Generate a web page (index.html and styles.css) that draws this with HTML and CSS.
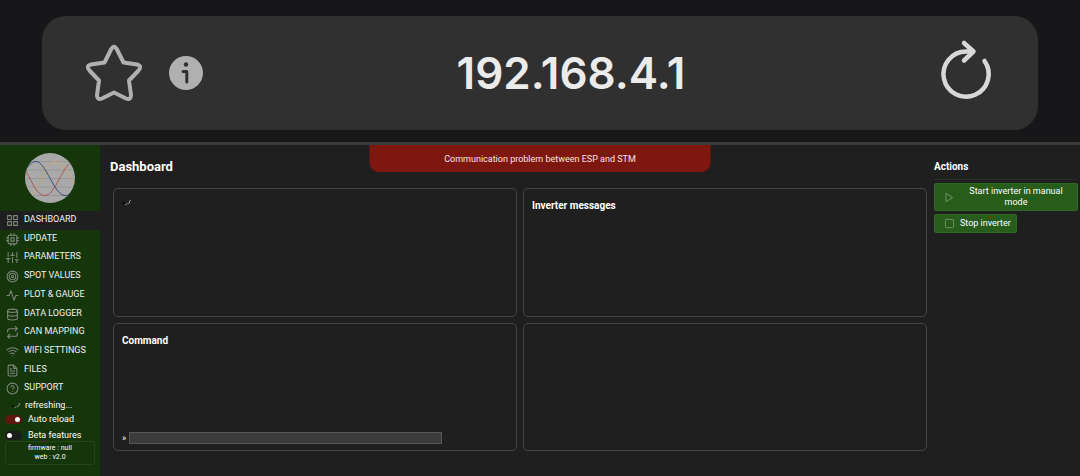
FILE: index.html
```html
<!DOCTYPE html>
<html lang="en">
<head>
  <meta charset="UTF-8">
  <meta name="viewport" content="width=device-width, initial-scale=1">
  <title>Dashboard</title>
  <link rel="stylesheet" href="styles.css">
</head>
<body>
  <!-- address bar -->
  <header class="browser">
    <div class="address-bar">
      <button class="bar-btn" type="button" aria-label="Bookmark">
        <svg class="star" viewBox="0 0 60 60"><path d="M27 6.500Q30 1 33 6.500L39.500 19.500L53 21.500Q58.500 23 54.500 27.500L45 37.500L47 52Q47 57.500 42 55.500L30 49.500L18 55.500Q13 57.500 13 52L15 37.500L5.500 27.500Q1.500 23 7 21.500L20.500 19.500Z"/></svg>
      </button>
      <button class="bar-btn" type="button" aria-label="Site information">
        <svg class="info" viewBox="0 0 34 34"><circle cx="17" cy="17" r="17" fill="#b0b0b0"/><circle cx="17" cy="8.500" r="2.200" fill="#303030"/><path d="M14 15.500h3.800V26" fill="none" stroke="#303030" stroke-width="3" stroke-linecap="round" stroke-linejoin="round"/></svg>
      </button>
      <span class="address">192.168.4.1</span>
      <button class="bar-btn" type="button" aria-label="Reload">
        <svg class="reload" viewBox="0 0 54 62"><path d="M45.500 19A22.600 22.600 0 1 1 27 9.500H34M25 1L34.500 9.500L25 18.500"/></svg>
      </button>
    </div>
  </header>

  <div class="app">
    <nav class="sidebar">
      <svg class="logo" viewBox="0 0 50 50">
        <circle cx="25" cy="25" r="25" fill="#a9a9a9"/>
        <path d="M7 8.500H43M2 17H48M0 25.500H50M2 34H48M7 42.500H43" stroke="#979797"/>
        <path d="M7 41C15 34 20 8.500 30 8.500C38 8.500 43 20 49 31" stroke="#c9a66a"/>
        <path d="M1 18C8 31 12 42.500 20 42.500C29 42.500 35 20 44.500 10.500" stroke="#ad5753"/>
        <path d="M2 15C5 11 8 8.500 11 8.500C21 8.500 29 42.500 40 42.500C42 42.500 43 42 44 41" stroke="#38507c"/>
      </svg>

      <ul class="menu">
        <li class="active"><a href="#dashboard"><svg class="icon" viewBox="0 0 24 24"><path d="M3 3h7v7H3zM14 3h7v7h-7zM14 14h7v7h-7zM3 14h7v7H3z"/></svg>DASHBOARD</a></li>
        <li><a href="#update"><svg class="icon" viewBox="0 0 24 24"><rect x="4" y="4" width="16" height="16" rx="2"/><path d="M9 9h6v6H9zM9 1v3M15 1v3M9 20v3M15 20v3M20 9h3M20 14h3M1 9h3M1 14h3"/></svg>UPDATE</a></li>
        <li><a href="#parameters"><svg class="icon" viewBox="0 0 24 24"><path d="M4 21v-7M4 10V3M12 21v-9M12 8V3M20 21v-5M20 12V3M1 14h6M9 8h6M17 16h6"/></svg>PARAMETERS</a></li>
        <li><a href="#spot"><svg class="icon" viewBox="0 0 24 24"><circle cx="12" cy="12" r="10"/><circle cx="12" cy="12" r="6"/><circle cx="12" cy="12" r="2"/></svg>SPOT VALUES</a></li>
        <li><a href="#plot"><svg class="icon" viewBox="0 0 24 24"><path d="M22 12h-4l-3 9L9 3l-3 9H2"/></svg>PLOT &amp; GAUGE</a></li>
        <li><a href="#logger"><svg class="icon" viewBox="0 0 24 24"><ellipse cx="12" cy="5" rx="9" ry="3"/><path d="M21 12c0 1.660-4 3-9 3s-9-1.340-9-3M3 5v14c0 1.660 4 3 9 3s9-1.340 9-3V5"/></svg>DATA LOGGER</a></li>
        <li><a href="#can"><svg class="icon" viewBox="0 0 24 24"><path d="M17 1l4 4-4 4M3 11V9a4 4 0 0 1 4-4h14M7 23l-4-4 4-4M21 13v2a4 4 0 0 1-4 4H3"/></svg>CAN MAPPING</a></li>
        <li><a href="#wifi"><svg class="icon" viewBox="0 0 24 24"><path d="M5 12.550a11 11 0 0 1 14.080 0M1.420 9a16 16 0 0 1 21.160 0M8.530 16.110a6 6 0 0 1 6.950 0M12 20h.01"/></svg>WIFI SETTINGS</a></li>
        <li><a href="#files"><svg class="icon" viewBox="0 0 24 24"><path d="M14 2H6a2 2 0 0 0-2 2v16a2 2 0 0 0 2 2h12a2 2 0 0 0 2-2V8zM14 2v6h6M16 13H8M16 17H8M10 9H8"/></svg>FILES</a></li>
        <li><a href="#support"><svg class="icon" viewBox="0 0 24 24"><circle cx="12" cy="12" r="10"/><path d="M9.090 9a3 3 0 0 1 5.830 1c0 2-3 3-3 3M12 17h.01"/></svg>SUPPORT</a></li>
      </ul>

      <div class="status">
        <svg class="spinner" viewBox="0 0 10 8"><circle cx="1.500" cy="5" r="1" fill="#050505"/><circle cx="4.500" cy="6.500" r=".8" fill="#777"/><circle cx="6.500" cy="5.500" r=".8" fill="#888"/><path d="M8 5V3.500L9 2" stroke="#999" fill="none"/></svg>
        refreshing...
      </div>
      <label class="switch"><input type="checkbox" checked>Auto reload</label>
      <label class="switch"><input type="checkbox">Beta features</label>
      <div class="version">firmware : null<br>web : v2.0</div>
    </nav>

    <main class="content">
      <h1>Dashboard</h1>
      <div class="cards">
        <section class="card">
          <svg class="spinner" viewBox="0 0 10 8"><circle cx="1.500" cy="4" r="1" fill="#050505"/><circle cx="4" cy="5.500" r=".8" fill="#888"/><circle cx="6" cy="4.500" r=".8" fill="#999"/><path d="M7.500 4V2.500L8.500 1" stroke="#aaa" fill="none"/></svg>
        </section>
        <section class="card">
          <h2>Inverter messages</h2>
        </section>
        <section class="card">
          <h2>Command</h2>
          <div class="prompt">
            <label for="command">»</label>
            <input type="text" id="command">
          </div>
        </section>
        <section class="card"></section>
      </div>
    </main>

    <aside class="actions">
      <h2>Actions</h2>
      <button type="button"><svg class="icon" viewBox="0 0 24 24"><path d="M5 3l14 9-14 9z"/></svg><span>Start inverter in manual mode</span></button>
      <button type="button"><svg class="icon" viewBox="0 0 24 24"><rect x="3" y="3" width="18" height="18" rx="2"/></svg><span>Stop inverter</span></button>
    </aside>

    <div class="alert" role="alert">Communication problem between ESP and STM</div>
  </div>
</body>
</html>
```

FILE: styles.css
```css
* {
  box-sizing: border-box;
}
body {
  margin: 0;
  min-height: 100vh;
  display: flex;
  flex-direction: column;
  font-family: Roboto, "Liberation Sans", sans-serif;
  font-size: 9px;
  color: #fff;
  background-color: #1f1f1f;
}
h1, h2, ul {
  margin: 0;
  padding: 0;
}
button, input {
  font: inherit;
  color: inherit;
}
svg {
  flex: none;
}

/* address bar */
.browser {
  padding: 16px 42px 12px;
  background-color: #171719;
  border-bottom: 3px solid #3b3b3b;
}
.address-bar {
  display: flex;
  align-items: center;
  gap: 25px;
  height: 114px;
  padding: 0 45px 0 42px;
  border-radius: 24px;
  background-color: #303030;
}
.bar-btn {
  display: flex;
  padding: 0;
  border: none;
  background: none;
}
.star, .reload {
  fill: none;
  stroke-linecap: round;
  stroke-linejoin: round;
}
.star {
  width: 60px;
  height: 60px;
  stroke: #b0b0b0;
  stroke-width: 4;
}
.info {
  width: 34px;
  height: 34px;
}
.reload {
  width: 54px;
  height: 62px;
  overflow: visible;
  stroke: #d8d8d8;
  stroke-width: 4.5;
}
.address {
  flex: 1;
  text-align: center;
  font-family: Inter, sans-serif;
  font-size: 44px;
  font-weight: 600;
  color: #ebebeb;
}

.app {
  position: relative;
  flex: 1;
  display: grid;
  grid-template-columns: 100px 1fr 146px;
}

/* sidebar */
.sidebar {
  display: flex;
  flex-direction: column;
  padding-top: 8px;
  background-color: #15350b;
}
.logo {
  width: 50px;
  height: 50px;
  margin: 0 auto 8px;
  fill: none;
}
.menu {
  display: grid;
  grid-auto-rows: 1fr;
  height: 187px;
  list-style: none;
}
.menu a {
  display: flex;
  align-items: flex-start;
  gap: 5px;
  height: 100%;
  padding-left: 6px;
  line-height: 16px;
  color: #f2f2f2;
  text-decoration: none;
}
.menu .active {
  background-color: #1f1f1f;
}
.icon {
  width: 13px;
  height: 13px;
  fill: none;
  stroke: #7d867a;
  stroke-width: 2;
  stroke-linecap: round;
  stroke-linejoin: round;
}
.menu .icon {
  margin-top: 3px;
}
.spinner {
  display: block;
  width: 10px;
  height: 8px;
}
.status {
  display: flex;
  align-items: center;
  gap: 4px;
  height: 13px;
  padding-left: 11px;
}
.switch {
  display: flex;
  align-items: center;
  gap: 6px;
  height: 16px;
  padding-left: 5px;
}
.switch input {
  appearance: none;
  display: flex;
  align-items: center;
  justify-content: flex-start;
  width: 17px;
  height: 9px;
  margin: 0;
  padding: 0 2px;
  border-radius: 5px;
  background-color: #1c1c1c;
}
.switch input::before {
  content: "";
  width: 5px;
  height: 5px;
  border-radius: 50%;
  background-color: #fff;
}
.switch input:checked {
  justify-content: flex-end;
  background-color: #5e170e;
}
.version {
  margin: -2px 5px 0;
  padding: 2px 0;
  border: 1px solid #24441a;
  border-radius: 3px;
  text-align: center;
  font-size: 7px;
  line-height: 9px;
}

/* main area */
.content {
  display: flex;
  flex-direction: column;
  padding: 13px 7px 25px 10px;
}
h1 {
  font-size: 13px;
  line-height: 18px;
}
h2 {
  font-size: 10px;
  line-height: 14px;
}
.cards {
  flex: 1;
  display: grid;
  grid-template-columns: 1fr 1fr;
  grid-template-rows: 1fr 1fr;
  gap: 6px;
  margin: 12px 0 0 3px;
}
.card {
  display: flex;
  flex-direction: column;
  padding: 10px 8px 6px;
  border: 1px solid #444;
  border-radius: 5px;
}
.prompt {
  display: flex;
  align-items: center;
  gap: 3px;
  margin-top: auto;
}
.prompt input {
  width: 81%;
  height: 12px;
  padding: 0 2px;
  border: 1px solid #555;
  background-color: #3b3b3b;
}

/* actions */
.actions {
  display: flex;
  flex-direction: column;
  align-items: flex-start;
  gap: 3px;
  padding: 15px 2px 0 0;
}
.actions h2 {
  width: 100%;
  padding-bottom: 5px;
  border-bottom: 1px solid #2b2b2b;
}
.actions button {
  display: flex;
  align-items: center;
  min-height: 19px;
  padding: 2px 5px 2px 9px;
  border: 1px solid #2f6a24;
  border-radius: 2px;
  line-height: 11px;
  background-color: #275c1a;
}
.actions button span {
  flex: 1;
  padding-left: 5px;
}
.actions .icon {
  width: 11px;
  height: 11px;
  stroke: #77936f;
}

/* banner hangs over the top edge of the page */
.alert {
  position: absolute;
  top: 0;
  left: 50%;
  width: 341px;
  padding: 7px 0 6px;
  transform: translateX(-50%);
  border-radius: 0 0 9px 9px;
  text-align: center;
  line-height: 14px;
  color: #f8e4e2;
  background-color: #7e170f;
}
```
